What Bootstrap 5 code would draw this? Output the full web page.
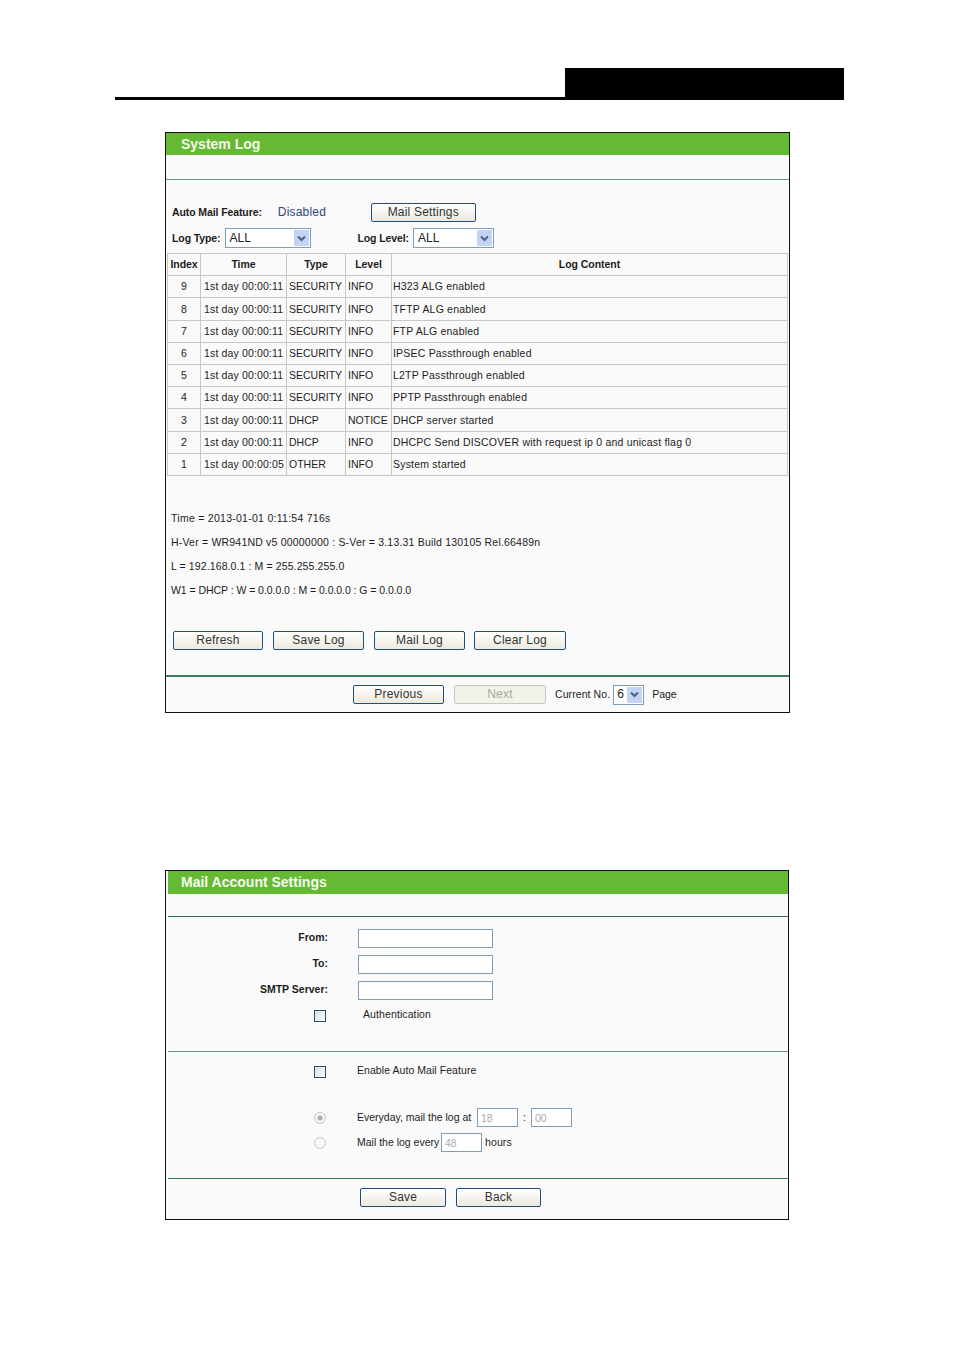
<!DOCTYPE html>
<html lang="en"><head><meta charset="utf-8"><title>System Log</title>
<link href="https://cdn.jsdelivr.net/npm/bootstrap@5.3.0/dist/css/bootstrap.min.css" rel="stylesheet">
<style>
body{background:#fff;font-family:"Liberation Sans",Arial,sans-serif;font-size:10.5px;color:#1c1c1c;line-height:1.2;width:954px;height:1350px;overflow:hidden}
.top-head{margin:68px 110px 0 115px;height:32px;border-bottom:3px solid #000}
.top-black{width:279px;height:32px;background:#000;margin-left:auto}
.panel-box{border:1px solid #111;background:#fafafa}
.panel-a{margin:32px 164px 0 165px;height:581px}
.panel-b{margin:157px 165px 0 165px;height:350px;padding:0 0 0 2px}
.title-bar{background:#66b933;color:#f4faee;font-weight:700;font-size:14px;height:22px;line-height:22px;padding-left:15px}
.panel-b .title-bar{padding-left:13px;height:23px;line-height:23px}
.rule{height:1px;background:#5f9f80}
.rule-dark{height:2px;background:#3f7f5f}
.feat{height:24px;padding-left:6px;margin-top:20px}
.lbl-b{font-weight:700;letter-spacing:-.1px}
.feat-state{color:#33457f;font-size:12px;letter-spacing:.2px;margin-left:16px;width:93px}
.tp-btn{font-family:"Liberation Sans",Arial,sans-serif;font-size:12px;letter-spacing:.2px;color:#333;background:linear-gradient(#fff,#ece9dc);border:1px solid #1f4f7f;border-radius:2px;padding:0;height:19px;line-height:17px;text-align:center}
.tp-btn:disabled{opacity:1;color:#a8a8a0;border-color:#c8c8b8;background:#f3f2ea}
.fake-sel{display:inline-flex;align-items:center;justify-content:space-between;border:1px solid #7f9db9;background:#fff;height:20px;font-size:12px;color:#222;padding:0 1px 0 3px}
.sel-arrow{width:15px;height:16px;background:#c3d3f5;display:flex;align-items:center;justify-content:center}
.filters{height:24px;padding-left:6px;margin-top:2px}
.sel-type{width:86px;margin-left:5px}
.sel-level{width:81px;margin-left:4px;padding-left:4px}
.lbl-level{margin-left:46px}
.log-tbl{width:621px;margin-left:1px;border-collapse:collapse;table-layout:fixed;margin-top:3px}
.log-tbl th,.log-tbl td{border:1px solid #c8c8c0;height:22.2px;padding:0 2px;white-space:nowrap;font-size:10.5px;font-weight:400;background:transparent;color:#1c1c1c;letter-spacing:.2px}
.log-tbl td:nth-child(2){padding-left:3px;letter-spacing:.15px}
.log-tbl td:nth-child(3),.log-tbl td:nth-child(4){letter-spacing:0}
.log-tbl td:last-child{padding-left:1px}
.log-tbl th{font-weight:700;text-align:center;letter-spacing:-.05px}
.log-tbl td.ctr{text-align:center}
.sys-info{padding:36px 0 0 5px}
.sys-info p{margin:0 0 11.4px;height:12.6px;font-size:10.5px;color:#1c1c1c}
.ln-a{letter-spacing:.27px}
.ln-b{letter-spacing:.2px}
.ln-c{letter-spacing:.11px}
.ln-d{letter-spacing:-.05px}
.act-row{padding-left:7px;margin-top:23px;gap:10px}
.act-last{margin-left:-1px}
.pager{height:35px;gap:9px;padding-left:187px}
.form-row{height:26px}
.lab-col{width:160px;text-align:right;font-weight:700;font-size:10.5px;padding-top:2px}
.tp-input{width:135px;height:19px;border:1px solid #7f9db9;background:#fff;margin-left:30px;display:block;padding:0}
.tp-check{appearance:none;width:12px;height:12px;border:1px solid #1c5180;background:linear-gradient(135deg,#dcdcd7,#fff);display:block;margin:0}
.chk-col{width:158px;display:flex;justify-content:flex-end}
.chk-top{padding-top:3px}
.tp-radio{appearance:none;width:12px;height:12px;border:1px solid #c8c8c0;border-radius:50%;background:#f6f6f2;display:block;margin:0}
.tp-radio.on{background:radial-gradient(circle,#aaa 0 2px,#f6f6f2 3px)}
.small-in{height:19px;border:1px solid #7f9db9;background:#fff;color:#aaa;font-size:10.5px;padding:0 3px;width:41px}
.txt-sp{letter-spacing:.1px;white-space:nowrap}
.opt-text{margin-left:31px;white-space:nowrap}
.enable-text{margin-top:-2px;letter-spacing:.06px}
.auth-text{margin-left:37px;padding-top:1px}
.every-text{width:120px}
.hours-text{width:84px}
.colon{margin:0 5px}
.cur-no{letter-spacing:.08px}
.page-sel{width:31px;margin-left:-6px}
.page-word{margin-left:-1px;letter-spacing:0}
.next-btn{margin-left:1px;width:92px}
</style></head><body>
<div class="top-head d-flex"><div class="top-black"></div></div>

<div class="panel-box panel-a d-flex flex-column">
<div class="title-bar">System Log</div>
<div style="height:24px"></div>
<div class="rule"></div>
<div class="feat d-flex align-items-center"><span class="lbl-b">Auto Mail Feature:</span><span class="feat-state">Disabled</span><button class="btn tp-btn" style="width:105px">Mail Settings</button></div>
<div class="filters d-flex align-items-center"><span class="lbl-b">Log Type:</span>
<span class="fake-sel sel-type">ALL<span class="sel-arrow"><svg width="9" height="7" viewBox="0 0 9 7"><path d="M1 1.5 4.500 5 8 1.500" fill="none" stroke="#4d6185" stroke-width="2"/></svg></span></span>
<span class="lbl-b lbl-level">Log Level:</span>
<span class="fake-sel sel-level">ALL<span class="sel-arrow"><svg width="9" height="7" viewBox="0 0 9 7"><path d="M1 1.5 4.500 5 8 1.500" fill="none" stroke="#4d6185" stroke-width="2"/></svg></span></span></div>
<table class="log-tbl"><colgroup><col style="width:33px"><col style="width:86px"><col style="width:59px"><col style="width:46px"><col></colgroup>
<thead><tr><th>Index</th><th>Time</th><th>Type</th><th>Level</th><th>Log Content</th></tr></thead>
<tbody>
<tr><td class="ctr">9</td><td>1st day 00:00:11</td><td>SECURITY</td><td>INFO</td><td>H323 ALG enabled</td></tr>
<tr><td class="ctr">8</td><td>1st day 00:00:11</td><td>SECURITY</td><td>INFO</td><td>TFTP ALG enabled</td></tr>
<tr><td class="ctr">7</td><td>1st day 00:00:11</td><td>SECURITY</td><td>INFO</td><td>FTP ALG enabled</td></tr>
<tr><td class="ctr">6</td><td>1st day 00:00:11</td><td>SECURITY</td><td>INFO</td><td>IPSEC Passthrough enabled</td></tr>
<tr><td class="ctr">5</td><td>1st day 00:00:11</td><td>SECURITY</td><td>INFO</td><td>L2TP Passthrough enabled</td></tr>
<tr><td class="ctr">4</td><td>1st day 00:00:11</td><td>SECURITY</td><td>INFO</td><td>PPTP Passthrough enabled</td></tr>
<tr><td class="ctr">3</td><td>1st day 00:00:11</td><td>DHCP</td><td>NOTICE</td><td>DHCP server started</td></tr>
<tr><td class="ctr">2</td><td>1st day 00:00:11</td><td>DHCP</td><td>INFO</td><td>DHCPC Send DISCOVER with request ip 0 and unicast flag 0</td></tr>
<tr><td class="ctr">1</td><td>1st day 00:00:05</td><td>OTHER</td><td>INFO</td><td>System started</td></tr>
</tbody></table>
<div class="sys-info">
<p class="ln-a">Time = 2013-01-01 0:11:54 716s</p>
<p class="ln-b">H-Ver = WR941ND v5 00000000 : S-Ver = 3.13.31 Build 130105 Rel.66489n</p>
<p class="ln-c">L = 192.168.0.1 : M = 255.255.255.0</p>
<p class="ln-d">W1 = DHCP : W = 0.0.0.0 : M = 0.0.0.0 : G = 0.0.0.0</p>
</div>
<div class="act-row d-flex">
<button class="btn tp-btn" style="width:90px">Refresh</button>
<button class="btn tp-btn" style="width:91px">Save Log</button>
<button class="btn tp-btn" style="width:91px">Mail Log</button>
<button class="btn tp-btn act-last" style="width:92px">Clear Log</button>
</div>
<div class="rule-dark mt-auto"></div>
<div class="pager d-flex align-items-center">
<button class="btn tp-btn" style="width:91px">Previous</button>
<button class="btn tp-btn next-btn" disabled>Next</button>
<span class="txt-sp cur-no">Current No.</span>
<span class="fake-sel page-sel">6<span class="sel-arrow"><svg width="9" height="7" viewBox="0 0 9 7"><path d="M1 1.5 4.500 5 8 1.500" fill="none" stroke="#4d6185" stroke-width="2"/></svg></span></span>
<span class="txt-sp page-word">Page</span>
</div>
</div>

<div class="panel-box panel-b d-flex flex-column">
<div class="title-bar">Mail Account Settings</div>
<div style="height:22px"></div>
<div class="rule-dark" style="height:1px;background:#2f6f4f"></div>
<div style="height:12px"></div>
<div class="form-row d-flex align-items-start"><span class="lab-col">From:</span><input class="tp-input" aria-label="From"></div>
<div class="form-row d-flex align-items-start"><span class="lab-col">To:</span><input class="tp-input" aria-label="To"></div>
<div class="form-row d-flex align-items-start"><span class="lab-col">SMTP Server:</span><input class="tp-input" aria-label="SMTP Server"></div>
<div class="d-flex align-items-start"><div class="chk-col chk-top"><input type="checkbox" class="tp-check" aria-label="Authentication"></div><span class="txt-sp auth-text">Authentication</span></div>
<div style="height:29px"></div>
<div class="rule"></div>
<div style="height:14px"></div>
<div class="d-flex align-items-start"><div class="chk-col"><input type="checkbox" class="tp-check" aria-label="Enable"></div><span class="opt-text enable-text">Enable Auto Mail Feature</span></div>
<div style="height:30px"></div>
<div class="d-flex align-items-center" style="height:19px"><div class="chk-col"><input type="radio" class="tp-radio on" name="m" aria-label="Everyday" disabled></div><span class="opt-text every-text">Everyday, mail the log at</span><input class="small-in" value="18" disabled><span class="colon">:</span><input class="small-in" value="00" disabled></div>
<div style="height:6px"></div>
<div class="d-flex align-items-center" style="height:19px"><div class="chk-col"><input type="radio" class="tp-radio" name="m" aria-label="Every" disabled></div><span class="opt-text hours-text">Mail the log every</span><input class="small-in" value="48" disabled><span class="txt-sp" style="margin-left:3px">hours</span></div>
<div style="height:26px"></div>
<div class="rule-dark" style="height:1px;background:#2f7f4f"></div>
<div class="d-flex" style="padding:9px 0 0 192px;gap:10px">
<button class="btn tp-btn" style="width:86px">Save</button>
<button class="btn tp-btn" style="width:85px">Back</button>
</div>
</div>
</body></html>
